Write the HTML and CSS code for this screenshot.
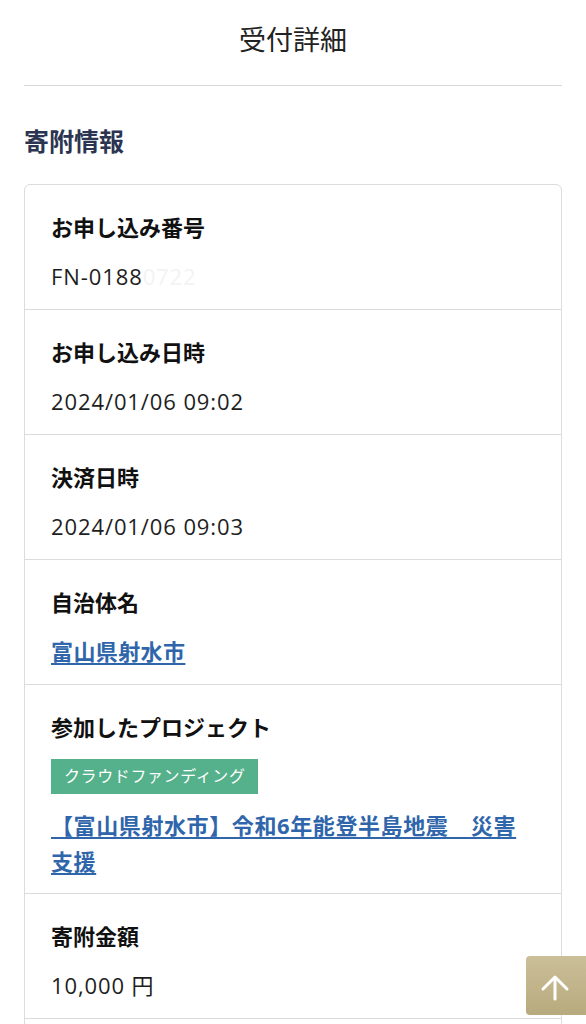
FILE: index.html
```html
<!DOCTYPE html>
<html lang="ja">
<head>
    <meta charset="UTF-8">
    <meta name="viewport" content="width=device-width, initial-scale=1.0">
    <title>受付詳細</title>
    <link rel="stylesheet" href="styles.css">
</head>
<body>
    <div class="page">
        <header class="page-header">
            <h1 class="page-title">受付詳細</h1>
        </header>

        <h2 class="section-title">寄附情報</h2>

        <div class="detail-card">
            <div class="detail-row">
                <div class="detail-label">お申し込み番号</div>
                <div class="detail-value">FN-0188<span class="masked">0722</span></div>
            </div>
            <div class="detail-row">
                <div class="detail-label">お申し込み日時</div>
                <div class="detail-value">2024/01/06 09:02</div>
            </div>
            <div class="detail-row">
                <div class="detail-label">決済日時</div>
                <div class="detail-value">2024/01/06 09:03</div>
            </div>
            <div class="detail-row">
                <div class="detail-label">自治体名</div>
                <div class="detail-value"><a class="detail-link" href="#">富山県射水市</a></div>
            </div>
            <div class="detail-row project-row">
                <div class="detail-label">参加したプロジェクト</div>
                <div class="tag-line"><span class="tag">クラウドファンディング</span></div>
                <div class="project-title"><a class="detail-link" href="#">【富山県射水市】令和6年能登半島地震　災害支援</a></div>
            </div>
            <div class="detail-row">
                <div class="detail-label">寄附金額</div>
                <div class="detail-value">10,000 円</div>
            </div>
            <div class="detail-row empty-row"></div>
        </div>
    </div>

    <a class="back-to-top" href="#">
        <svg width="60" height="59" viewBox="0 0 60 59">
            <path d="M29 22 V43" stroke="#fff" stroke-width="3" stroke-linecap="round" fill="none"/>
            <path d="M17 33 L29 21 L41 33" stroke="#fff" stroke-width="3" stroke-linecap="round" stroke-linejoin="round" fill="none"/>
        </svg>
    </a>
</body>
</html>
```

FILE: styles.css
```css
body {
    margin: 0;
    background-color: #fff;
    color: #1a1a1a;
    font-family: "Open Sans", "Noto Sans CJK JP", sans-serif;
}

.page {
    padding: 0 24px;
}

.page-header {
    padding: 20px 0 25px;
    border-bottom: 1px solid #d9d9d9;
}

.page-title {
    margin: 0;
    text-align: center;
    font-size: 27px;
    font-weight: 400;
    line-height: 40px;
    color: #222;
}

.section-title {
    margin: 38px 0 26px;
    font-size: 25px;
    font-weight: 700;
    line-height: 34px;
    color: #2b3552;
}

.detail-card {
    border: 1px solid #dcdcdc;
    border-radius: 6px;
}

.detail-row {
    padding: 26px 26px 17px;
    border-top: 1px solid #dcdcdc;
}

.detail-row:first-child {
    border-top: none;
}

.project-row {
    padding-bottom: 14px;
}

.empty-row {
    height: 40px;
}

.detail-label {
    font-size: 22px;
    font-weight: 700;
    line-height: 32px;
    color: #111;
}

.detail-value {
    margin-top: 17px;
    font-size: 22px;
    line-height: 32px;
    letter-spacing: 0.9px;
    color: #1e1e1e;
}

.masked {
    color: #f3f3f3;
}

.detail-link {
    color: #2f66ab;
    font-weight: 700;
    text-decoration: underline;
    text-underline-offset: 3px;
}

.detail-value .detail-link {
    letter-spacing: 0.4px;
}

.tag-line {
    margin-top: 16px;
    display: flex;
}

.tag {
    background-color: #55b18b;
    color: #fff;
    font-size: 16px;
    line-height: 35px;
    padding: 0 13px;
    letter-spacing: 0.6px;
}

.project-title {
    margin-top: 13px;
    font-size: 22px;
    line-height: 36px;
    letter-spacing: 0.6px;
}

.back-to-top {
    position: fixed;
    right: 0;
    bottom: 9px;
    width: 60px;
    height: 59px;
    border-radius: 4px 0 0 4px;
    background: linear-gradient(#cbbf99, #b8aa7e);
    display: flex;
}
```
